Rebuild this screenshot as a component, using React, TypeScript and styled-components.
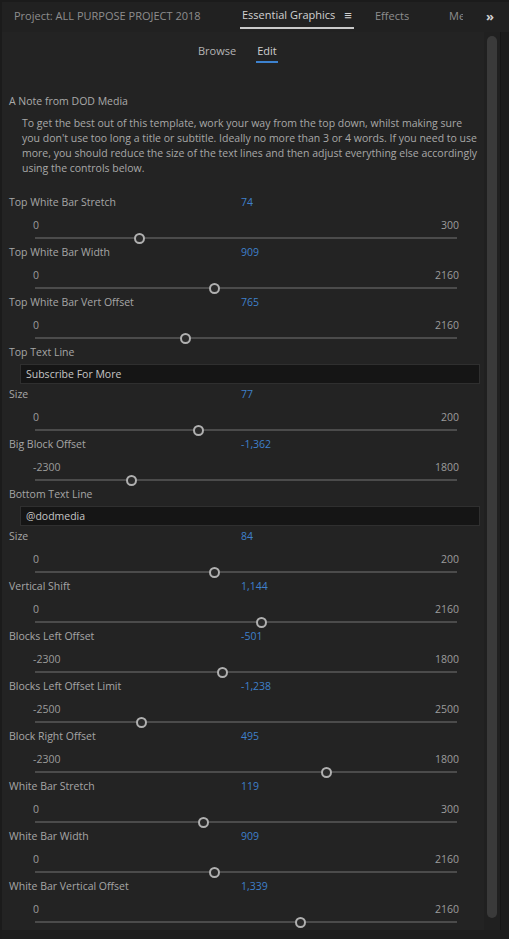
import React from "react";
import styled, { createGlobalStyle } from "styled-components";

const GlobalStyle = createGlobalStyle`
  html, body { margin: 0; padding: 0; background: #1b1b1b; }
  * { box-sizing: border-box; }
`;

const FONT = `"Open Sans", "Noto Sans", sans-serif`;

const Frame = styled.div`
  width: 509px;
  height: 939px;
  background: #1b1b1b;
  display: flex;
  flex-direction: column;
  overflow: hidden;
  font-family: ${FONT};
  padding: 2px 0 0 2px;
`;

const TabBar = styled.div`
  height: 30px;
  background: #212121;
  position: relative;
`;

const Tab = styled.div<{ $active?: boolean; $left: number; $width?: number }>`
  position: absolute;
  left: ${(p) => p.$left}px;
  top: 0;
  height: 27px;
  display: flex;
  align-items: center;
  gap: 9px;
  font-size: 11px;
  color: ${(p) => (p.$active ? "#d2d2d2" : "#8e8e8e")};
  white-space: nowrap;
  overflow: hidden;
  ${(p) => (p.$width ? `width: ${p.$width}px;` : "")}
  ${(p) => (p.$active ? `border-bottom: 2px solid #c9c9c9; padding: 0 2px;` : "")}
`;

const Chevrons = styled.div`
  position: absolute;
  left: 484px;
  top: 0;
  height: 27px;
  display: flex;
  align-items: center;
  color: #d0d0d0;
  font-weight: 700;
  font-size: 13px;
`;

const Body = styled.div`
  flex: 1;
  display: flex;
  background: #232323;
  min-height: 0;
`;

const Content = styled.div`
  flex: 1;
  min-width: 0;
  display: flex;
  flex-direction: column;
`;

const ScrollTrack = styled.div`
  width: 16px;
  padding: 4px 3px 0 3px;
  background: #202020;
  display: flex;
  flex-direction: column;
`;

const ScrollThumb = styled.div`
  height: 882px;
  border-radius: 5px;
  background: #3a3a3a;
`;

const RightEdge = styled.div`
  width: 9px;
  background: #1c1c1c;
  border-left: 1px solid #161616;
`;

const SubTabs = styled.div`
  display: flex;
  gap: 19px;
  padding: 11px 0 0 195px;
  height: 37px;
`;

const SubTab = styled.div<{ $active?: boolean }>`
  font-size: 11px;
  color: ${(p) => (p.$active ? "#d0d0d0" : "#b4b4b4")};
  height: 20px;
  padding: 0 1px;
  border-bottom: 2px solid ${(p) => (p.$active ? "#3d82cf" : "transparent")};
`;

const NoteTitle = styled.div`
  margin: 25px 0 0 7px;
  font-size: 10.5px;
  line-height: 14px;
  color: #aaaaaa;
`;

const NoteText = styled.div`
  margin: 8px 0 0 20px;
  font-size: 10.5px;
  line-height: 15px;
  color: #a8a8a8;
  display: flex;
  flex-direction: column;
`;

const NoteLine = styled.span`
  white-space: nowrap;
`;

const List = styled.div`
  margin-top: 19px;
  display: flex;
  flex-direction: column;
`;

const LabelRow = styled.div`
  display: grid;
  grid-template-columns: 232px 1fr;
  padding-left: 7px;
  height: 14px;
  line-height: 14px;
  font-size: 10.5px;
`;

const Label = styled.span`
  color: #a6a6a6;
`;

const Value = styled.span`
  color: #3f80cb;
`;

const SliderBlock = styled.div`
  height: 50px;
  display: flex;
  flex-direction: column;
`;

const RangeRow = styled.div`
  margin-top: 9px;
  height: 14px;
  line-height: 14px;
  display: flex;
  justify-content: space-between;
  padding: 0 0 0 31px;
  width: 457px;
  font-size: 10.5px;
  color: #9c9c9c;
`;

const TrackArea = styled.div`
  position: relative;
  margin-left: 31px;
  width: 431px;
  height: 13px;
`;

const TrackLine = styled.div`
  position: absolute;
  left: 2px;
  right: 7px;
  top: 5px;
  height: 2px;
  background: #4b4b4b;
`;

const Knob = styled.div`
  position: absolute;
  top: 1px;
  width: 11px;
  height: 11px;
  margin-left: -5.5px;
  border-radius: 50%;
  border: 2px solid #b0b0b0;
  background: #2a2a2a;
`;

const TextBlock = styled.div`
  height: 42px;
  display: flex;
  flex-direction: column;
`;

const TextInput = styled.div`
  margin: 5px 0 0 18px;
  width: 460px;
  height: 20px;
  background: #151515;
  border: 1px solid #2f2f2f;
  color: #c6c6c6;
  font-size: 10.5px;
  line-height: 18px;
  padding-left: 5px;
`;

const BottomBar = styled.div`
  height: 9px;
  background: #1c1c1c;
`;

type Item =
  | { kind: "slider"; label: string; value: number; min: number; max: number }
  | { kind: "text"; label: string; text: string };

const items: Item[] = [
  { kind: "slider", label: "Top White Bar Stretch", value: 74, min: 0, max: 300 },
  { kind: "slider", label: "Top White Bar Width", value: 909, min: 0, max: 2160 },
  { kind: "slider", label: "Top White Bar Vert Offset", value: 765, min: 0, max: 2160 },
  { kind: "text", label: "Top Text Line", text: "Subscribe For More" },
  { kind: "slider", label: "Size", value: 77, min: 0, max: 200 },
  { kind: "slider", label: "Big Block Offset", value: -1362, min: -2300, max: 1800 },
  { kind: "text", label: "Bottom Text Line", text: "@dodmedia" },
  { kind: "slider", label: "Size", value: 84, min: 0, max: 200 },
  { kind: "slider", label: "Vertical Shift", value: 1144, min: 0, max: 2160 },
  { kind: "slider", label: "Blocks Left Offset", value: -501, min: -2300, max: 1800 },
  { kind: "slider", label: "Blocks Left Offset Limit", value: -1238, min: -2500, max: 2500 },
  { kind: "slider", label: "Block Right Offset", value: 495, min: -2300, max: 1800 },
  { kind: "slider", label: "White Bar Stretch", value: 119, min: 0, max: 300 },
  { kind: "slider", label: "White Bar Width", value: 909, min: 0, max: 2160 },
  { kind: "slider", label: "White Bar Vertical Offset", value: 1339, min: 0, max: 2160 },
];

const noteLines = [
  "To get the best out of this template, work your way from the top down, whilst making sure",
  "you don't use too long a title or subtitle. Ideally no more than 3 or 4 words. If you need to use",
  "more, you should reduce the size of the text lines and then adjust everything else accordingly",
  "using the controls below.",
];

const fmt = (n: number) => n.toLocaleString("en-US");

export default function App() {
  return (
    <>
      <GlobalStyle />
      <Frame>
        <TabBar>
          <Tab $left={12}>Project: ALL PURPOSE PROJECT 2018</Tab>
          <Tab $left={238} $active>
            <span>Essential Graphics</span>
            <span style={{ fontSize: 13 }}>≡</span>
          </Tab>
          <Tab $left={373}>Effects</Tab>
          <Tab $left={447} $width={14}>Me</Tab>
          <Chevrons>»</Chevrons>
        </TabBar>
        <Body>
          <Content>
            <SubTabs>
              <SubTab>Browse</SubTab>
              <SubTab $active>Edit</SubTab>
            </SubTabs>
            <NoteTitle>A Note from DOD Media</NoteTitle>
            <NoteText>
              {noteLines.map((l, i) => (
                <NoteLine key={i}>{l}</NoteLine>
              ))}
            </NoteText>
            <List>
              {items.map((it, i) =>
                it.kind === "slider" ? (
                  <SliderBlock key={i}>
                    <LabelRow>
                      <Label>{it.label}</Label>
                      <Value>{fmt(it.value)}</Value>
                    </LabelRow>
                    <RangeRow>
                      <span>{it.min}</span>
                      <span>{it.max}</span>
                    </RangeRow>
                    <TrackArea>
                      <TrackLine />
                      <Knob style={{ left: `${((it.value - it.min) / (it.max - it.min)) * 100}%` }} />
                    </TrackArea>
                  </SliderBlock>
                ) : (
                  <TextBlock key={i}>
                    <LabelRow>
                      <Label>{it.label}</Label>
                    </LabelRow>
                    <TextInput>{it.text}</TextInput>
                  </TextBlock>
                )
              )}
            </List>
          </Content>
          <ScrollTrack>
            <ScrollThumb />
          </ScrollTrack>
          <RightEdge />
        </Body>
        <BottomBar />
      </Frame>
    </>
  );
}
